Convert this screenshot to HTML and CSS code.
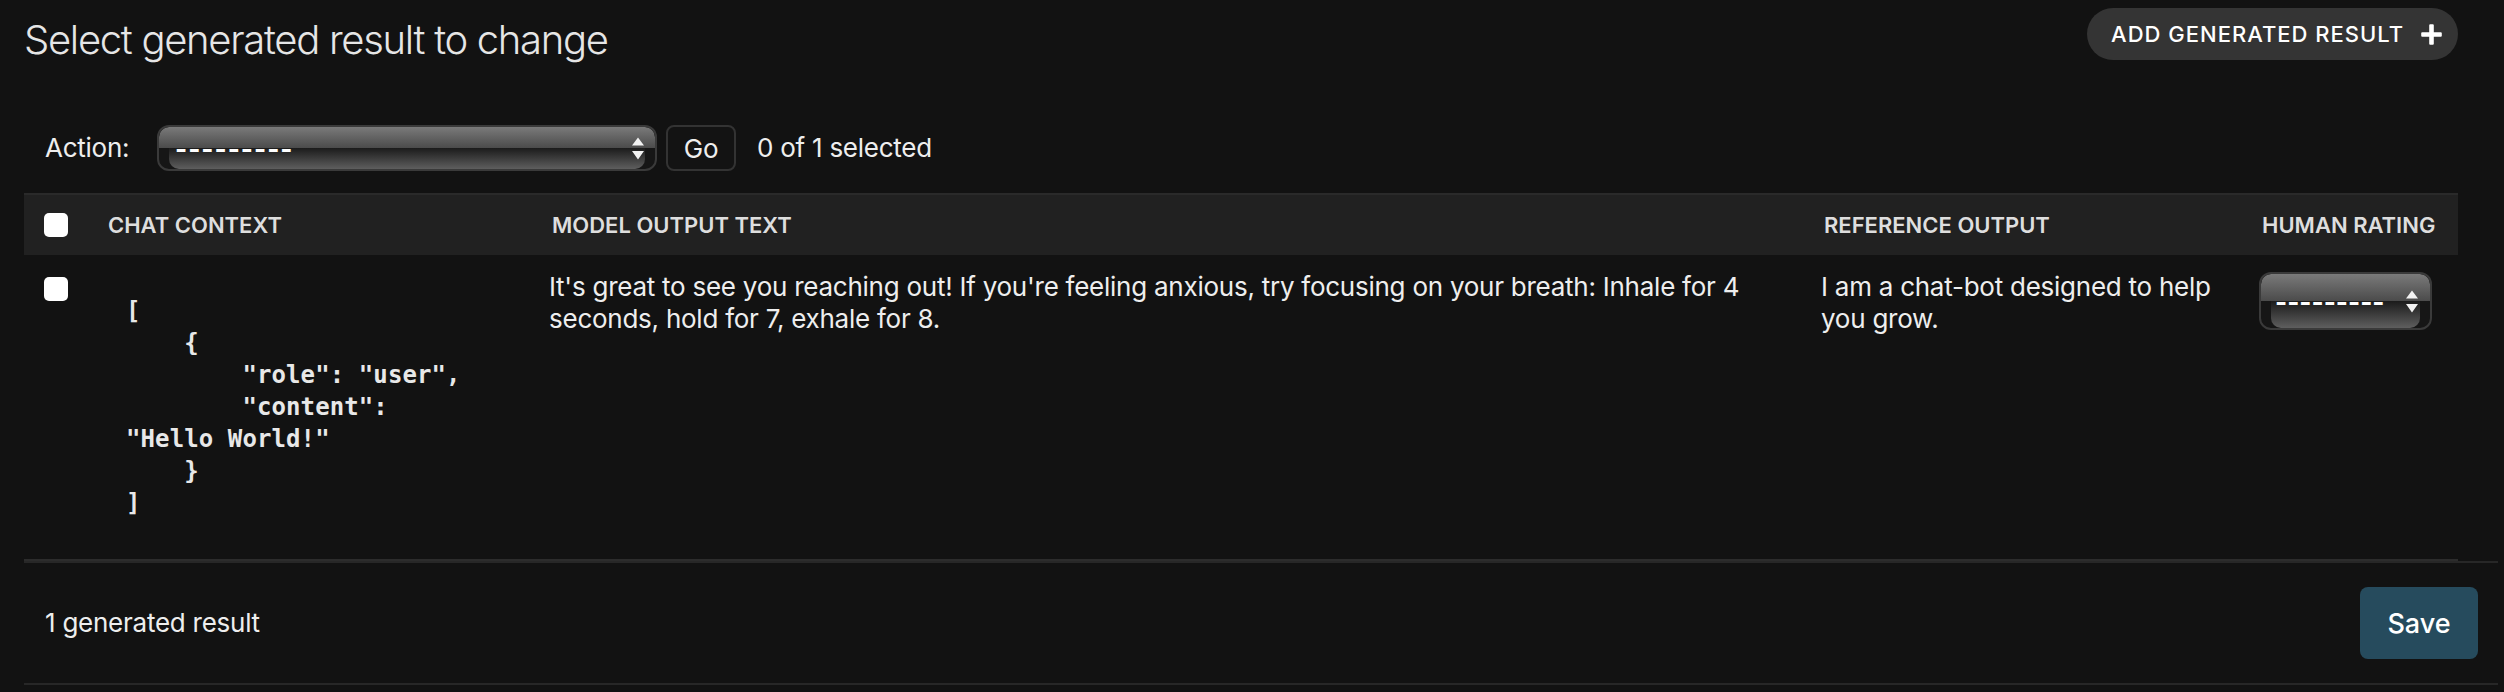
FILE: index.html
```html
<!DOCTYPE html>
<html lang="en">
<head>
<meta charset="utf-8">
<title>Select generated result to change</title>
<link rel="stylesheet" href="styles.css">
</head>
<body>
<div class="page">
  <div class="page-head">
    <h1 class="title">Select generated result to change</h1>
    <a class="add-link" href="#">ADD GENERATED RESULT
      <svg class="plus" width="21" height="21" viewBox="0 0 21 21" aria-hidden="true"><path d="M8.2 1.2a1 1 0 0 1 1-1h2.6a1 1 0 0 1 1 1v7h7a1 1 0 0 1 1 1v2.6a1 1 0 0 1-1 1h-7v7a1 1 0 0 1-1 1H9.2a1 1 0 0 1-1-1v-7h-7a1 1 0 0 1-1-1V9.2a1 1 0 0 1 1-1h7z" fill="#fff"/></svg>
    </a>
  </div>

  <form class="changelist">
    <div class="actions">
      <label class="action-label">Action:</label>
      <span class="select-wrap action-select">
        <select class="select-native"><option>---------</option></select>
        <svg class="select-arrows" width="12" height="23" viewBox="0 0 12 23" aria-hidden="true"><path d="M0 8.5L6 0.5L12 8.5Z M0 14L6 22.5L12 14Z" fill="#f2f2f2"/></svg>
      </span>
      <button type="button" class="go-btn">Go</button>
      <span class="counter">0 of 1 selected</span>
    </div>

    <table class="results">
      <colgroup>
        <col class="c-check">
        <col class="c-chat">
        <col class="c-model">
        <col class="c-ref">
        <col class="c-rating">
      </colgroup>
      <thead>
        <tr>
          <th class="col-check"><input type="checkbox" class="cb"></th>
          <th>Chat context</th>
          <th>Model output text</th>
          <th>Reference output</th>
          <th>Human rating</th>
        </tr>
      </thead>
      <tbody>
        <tr>
          <td class="col-check"><input type="checkbox" class="cb cb-row"></td>
          <th class="field-chat"><pre class="json">[
    {
        "role": "user",
        "content": "Hello World!"
    }
]</pre></th>
          <td class="text-cell">It's great to see you reaching out! If you're feeling anxious, try focusing on your breath: Inhale for 4 seconds, hold for 7, exhale for 8.</td>
          <td class="text-cell">I am a chat-bot designed to help you grow.</td>
          <td>
            <span class="select-wrap rating-select">
              <select class="select-native"><option>---------</option></select>
              <svg class="select-arrows" width="12" height="23" viewBox="0 0 12 23" aria-hidden="true"><path d="M0 8.5L6 0.5L12 8.5Z M0 14L6 22.5L12 14Z" fill="#f2f2f2"/></svg>
            </span>
          </td>
        </tr>
      </tbody>
    </table>

    <div class="paginator">
      <span class="result-count">1 generated result</span>
      <button type="button" class="save-btn">Save</button>
    </div>
  </form>
</div>
</body>
</html>
```

FILE: styles.css
```css
* { box-sizing: border-box; }

html, body {
  margin: 0;
  background: #121212;
  color: #eeeeee;
  font-family: Inter, "Liberation Sans", sans-serif;
}

.page {
  padding: 8px 46px 0 24px;
}

.page-head {
  display: flex;
  justify-content: space-between;
  align-items: flex-start;
}

.title {
  margin: 8px 0 0 0;
  font-size: 40px;
  line-height: 48px;
  font-weight: 300;
  color: #e6e6e6;
  letter-spacing: -1.3px;
}

.add-link {
  display: inline-flex;
  align-items: center;
  gap: 17px;
  height: 52px;
  padding: 0 16px 0 24px;
  border-radius: 26px;
  background: #343434;
  color: #ffffff;
  text-decoration: none;
  font-size: 22px;
  font-weight: 500;
  letter-spacing: 1px;
}

.plus { display: block; }

/* actions bar */
.actions {
  display: flex;
  align-items: center;
  margin-top: 41px;
  padding: 20px 0 22px 21px;
  font-size: 26px;
  line-height: 32px;
  letter-spacing: -0.25px;
}

.action-label {
  width: 112px;
  color: #eeeeee;
}

.select-wrap {
  position: relative;
  display: inline-block;
  border: 2px solid #3a3a3a;
  border-radius: 12px;
  background: #161616;
  overflow: hidden;
}

.select-wrap::before {
  content: "";
  position: absolute;
  left: 0;
  right: 0;
  top: 0;
  height: 50%;
  background: linear-gradient(#7a7a7a, #4b4b4b);
  border-radius: 10px 10px 0 0;
}

.select-wrap::after {
  content: "";
  position: absolute;
  left: 10px;
  right: 10px;
  bottom: 0;
  height: 50%;
  background: linear-gradient(#1b1b1b, #5e5e5e);
  border-radius: 0 0 10px 10px;
}

.select-native {
  position: relative;
  z-index: 1;
  display: block;
  width: 100%;
  height: 100%;
  margin: 0;
  border: 0;
  background: transparent;
  -webkit-appearance: none;
  appearance: none;
  color: #ffffff;
  font-family: Inter, "Liberation Sans", sans-serif;
  font-size: 26px;
  font-weight: 700;
  letter-spacing: 1px;
  padding: 0 30px 0 16px;
  outline: none;
}

.select-arrows {
  position: absolute;
  z-index: 2;
}

.action-select {
  width: 500px;
  height: 46px;
}

.action-select .select-arrows {
  right: 11px;
  top: 10px;
}

.go-btn {
  margin-left: 9px;
  width: 70px;
  height: 46px;
  border: 2px solid #333333;
  border-radius: 8px;
  background: #131313;
  color: #eeeeee;
  font-family: Inter, "Liberation Sans", sans-serif;
  font-size: 26px;
  letter-spacing: -0.25px;
  padding: 0;
}

.counter {
  margin-left: 21px;
  color: #eeeeee;
}

/* results table */
.results {
  width: 100%;
  border-collapse: collapse;
  table-layout: fixed;
}

.c-check { width: 68px; }
.c-chat { width: 444px; }
.c-model { width: 1272px; }
.c-ref { width: 438px; }
.c-rating { width: 212px; }

.results thead th {
  background: #212121;
  border-top: 2px solid #2a2a2a;
  padding: 14px 16px;
  line-height: 32px;
  font-size: 22px;
  font-weight: 600;
  text-transform: uppercase;
  text-align: left;
  color: #dedede;
  vertical-align: middle;
  white-space: nowrap;
}

.results thead th.col-check,
.results tbody td.col-check {
  padding-left: 20px;
  padding-right: 0;
}

.cb {
  -webkit-appearance: none;
  appearance: none;
  display: block;
  width: 24px;
  height: 24px;
  margin: 0;
  border: 0;
  border-radius: 5px;
  background: #ffffff;
}

.cb-row { margin-top: 6px; }

.results tbody td,
.results tbody th {
  padding: 16px;
  vertical-align: top;
  text-align: left;
  font-size: 26px;
  line-height: 32px;
  font-weight: 400;
  letter-spacing: -0.25px;
  color: #eeeeee;
  border-bottom: 2px solid #2c2c2c;
}

.results tbody td.text-cell {
  padding-left: 13px;
}

.json {
  width: 24ch;
  margin: 24px 0 24px 18px;
  font-family: "DejaVu Sans Mono", "Liberation Mono", monospace;
  font-size: 24px;
  line-height: 32px;
  font-weight: 700;
  letter-spacing: 0.1px;
  color: #e8e8e8;
  white-space: pre-wrap;
}

.rating-select {
  width: 173px;
  height: 58px;
  margin: 1px 0 0 -3px;
}

.rating-select .select-native {
  padding: 0 20px 0 14px;
  letter-spacing: 0;
}

.rating-select .select-arrows {
  right: 12px;
  top: 16px;
}

/* paginator */
.paginator {
  display: flex;
  align-items: center;
  justify-content: space-between;
  margin-right: -40px;
  padding: 24px 20px 24px 21px;
  border-top: 2px solid #272727;
  border-bottom: 2px solid #272727;
  font-size: 26px;
  line-height: 32px;
  letter-spacing: -0.25px;
  color: #eeeeee;
}

.save-btn {
  width: 118px;
  height: 72px;
  border: 0;
  border-radius: 8px;
  background: #264b5d;
  color: #ffffff;
  font-family: Inter, "Liberation Sans", sans-serif;
  font-size: 27px;
  font-weight: 500;
  padding: 0;
}
```
